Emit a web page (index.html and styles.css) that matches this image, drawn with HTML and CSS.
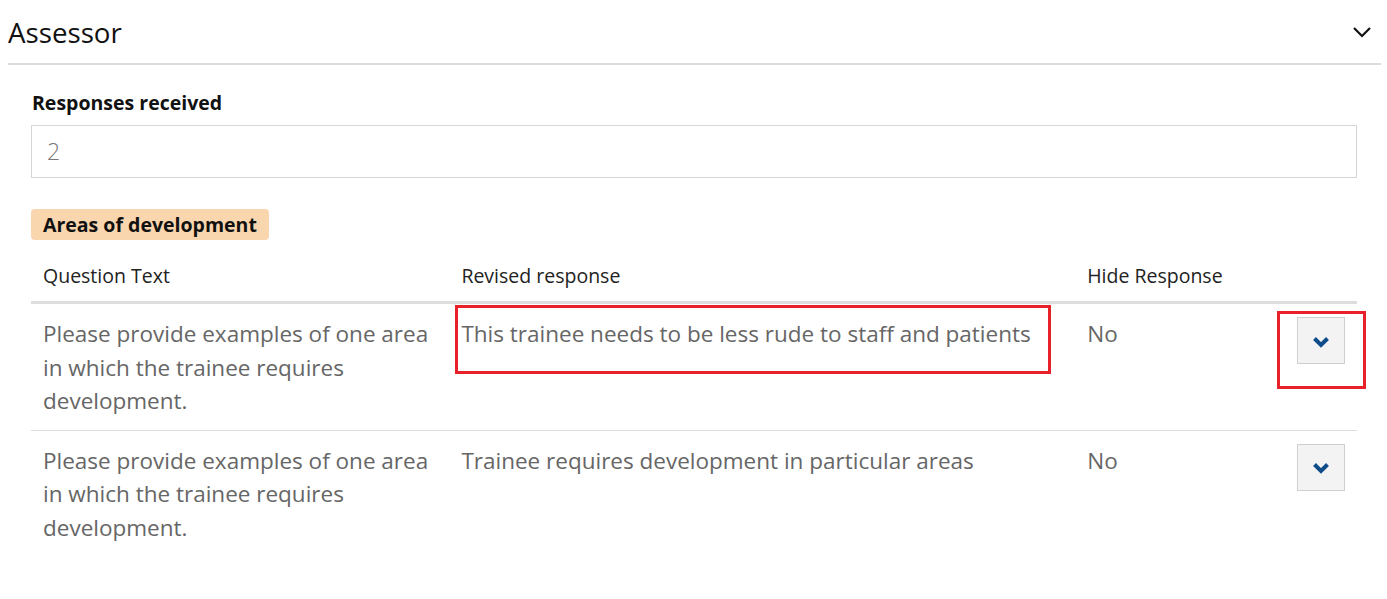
FILE: index.html
```html
<!DOCTYPE html>
<html lang="en">
<head>
<meta charset="utf-8">
<title>Assessor</title>
<link rel="stylesheet" href="styles.css">
</head>
<body>
<section class="panel">
  <header class="panel-head">
    <h2 class="panel-title">Assessor</h2>
    <svg class="panel-toggle" width="20" height="12" viewBox="0 0 20 12" aria-hidden="true">
      <polyline points="2,2 10,10 18,2" fill="none" stroke="#111" stroke-width="2.2"/>
    </svg>
  </header>
  <div class="panel-body">
    <div class="field">
      <label class="field-label">Responses received</label>
      <div class="field-input">2</div>
    </div>
    <span class="badge">Areas of development</span>
    <table class="resp-table">
      <thead>
        <tr>
          <th class="c1">Question Text</th>
          <th class="c2">Revised response</th>
          <th class="c3">Hide Response</th>
          <th class="c4"></th>
        </tr>
      </thead>
      <tbody>
        <tr>
          <td>Please provide examples of one area in which the trainee requires development.</td>
          <td>This trainee needs to be less rude to staff and patients</td>
          <td>No</td>
          <td class="c4"><button class="expand"><svg width="20" height="14" viewBox="0 0 20 14" aria-hidden="true"><polyline points="3.5,3.5 10,10 16.5,3.5" fill="none" stroke="#0f4c8a" stroke-width="4"/></svg></button></td>
        </tr>
        <tr>
          <td>Please provide examples of one area in which the trainee requires development.</td>
          <td>Trainee requires development in particular areas</td>
          <td>No</td>
          <td class="c4"><button class="expand"><svg width="20" height="14" viewBox="0 0 20 14" aria-hidden="true"><polyline points="3.5,3.5 10,10 16.5,3.5" fill="none" stroke="#0f4c8a" stroke-width="4"/></svg></button></td>
        </tr>
      </tbody>
    </table>
    <div class="annot annot-1"></div>
    <div class="annot annot-2"></div>
  </div>
</section>
</body>
</html>
```

FILE: styles.css
```css
* { box-sizing: border-box; }
body {
  margin: 0;
  font-family: "Open Sans", "Liberation Sans", sans-serif;
  background: #fff;
  color: #222;
}
.panel {
  padding: 0 6px 0 8px;
}
.panel-head {
  display: flex;
  align-items: center;
  justify-content: space-between;
  height: 65px;
  border-bottom: 2px solid #dcdcdc;
  padding-right: 9px;
}
.panel-title {
  margin: 0;
  font-size: 27.7px;
  font-weight: 400;
  line-height: 66px;
  color: #111;
}
.panel-toggle { display: block; margin-top: 1px; }
.panel-body {
  position: relative;
  padding: 25px 24px 0 23px;
}
.field-label {
  display: block;
  font-size: 19.5px;
  font-weight: 700;
  line-height: 26px;
  color: #111;
  padding-left: 1px;
}
.field-input {
  margin-top: 9px;
  height: 53px;
  border: 1px solid #d6d6d6;
  padding: 0 15px;
  font-size: 23px;
  font-weight: 300;
  line-height: 51px;
  color: #777;
}
.badge {
  display: inline-block;
  margin-top: 31px;
  background: #f9d6ae;
  border-radius: 4px;
  padding: 0 12px 0 12px;
  height: 31px;
  font-size: 19.5px;
  font-weight: 700;
  line-height: 31px;
  color: #111;
}
.resp-table {
  width: 100%;
  border-collapse: collapse;
  margin-top: 12px;
}
.resp-table th {
  text-align: left;
  font-weight: 400;
  font-size: 19.5px;
  line-height: 26px;
  color: #222;
  padding: 11px 12px 12px;
  border-bottom: 3px solid #dddddd;
}
.resp-table .c1 { width: 419px; }
.resp-table .c2 { width: 627px; }
.resp-table .c3 { width: 210px; }
.resp-table td {
  vertical-align: top;
  font-size: 22.5px;
  line-height: 33.5px;
  color: #666;
  padding: 13px 12px 12px;
  border-bottom: 1px solid #dddddd;
}
.resp-table tbody tr:last-child td { border-bottom: none; }
.expand {
  display: flex;
  align-items: center;
  justify-content: center;
  width: 48px;
  height: 47px;
  padding: 0;
  background: #f3f3f3;
  border: 1px solid #cfcfcf;
  border-radius: 0;
}
.expand svg { display: block; margin-top: 2px; }
.annot {
  position: absolute;
  border: 3px solid #e8202a;
  pointer-events: none;
}
.annot-1 { left: 447px; top: 240px; width: 596px; height: 69px; }
.annot-2 { left: 1269px; top: 246px; width: 89px; height: 78px; }
```
